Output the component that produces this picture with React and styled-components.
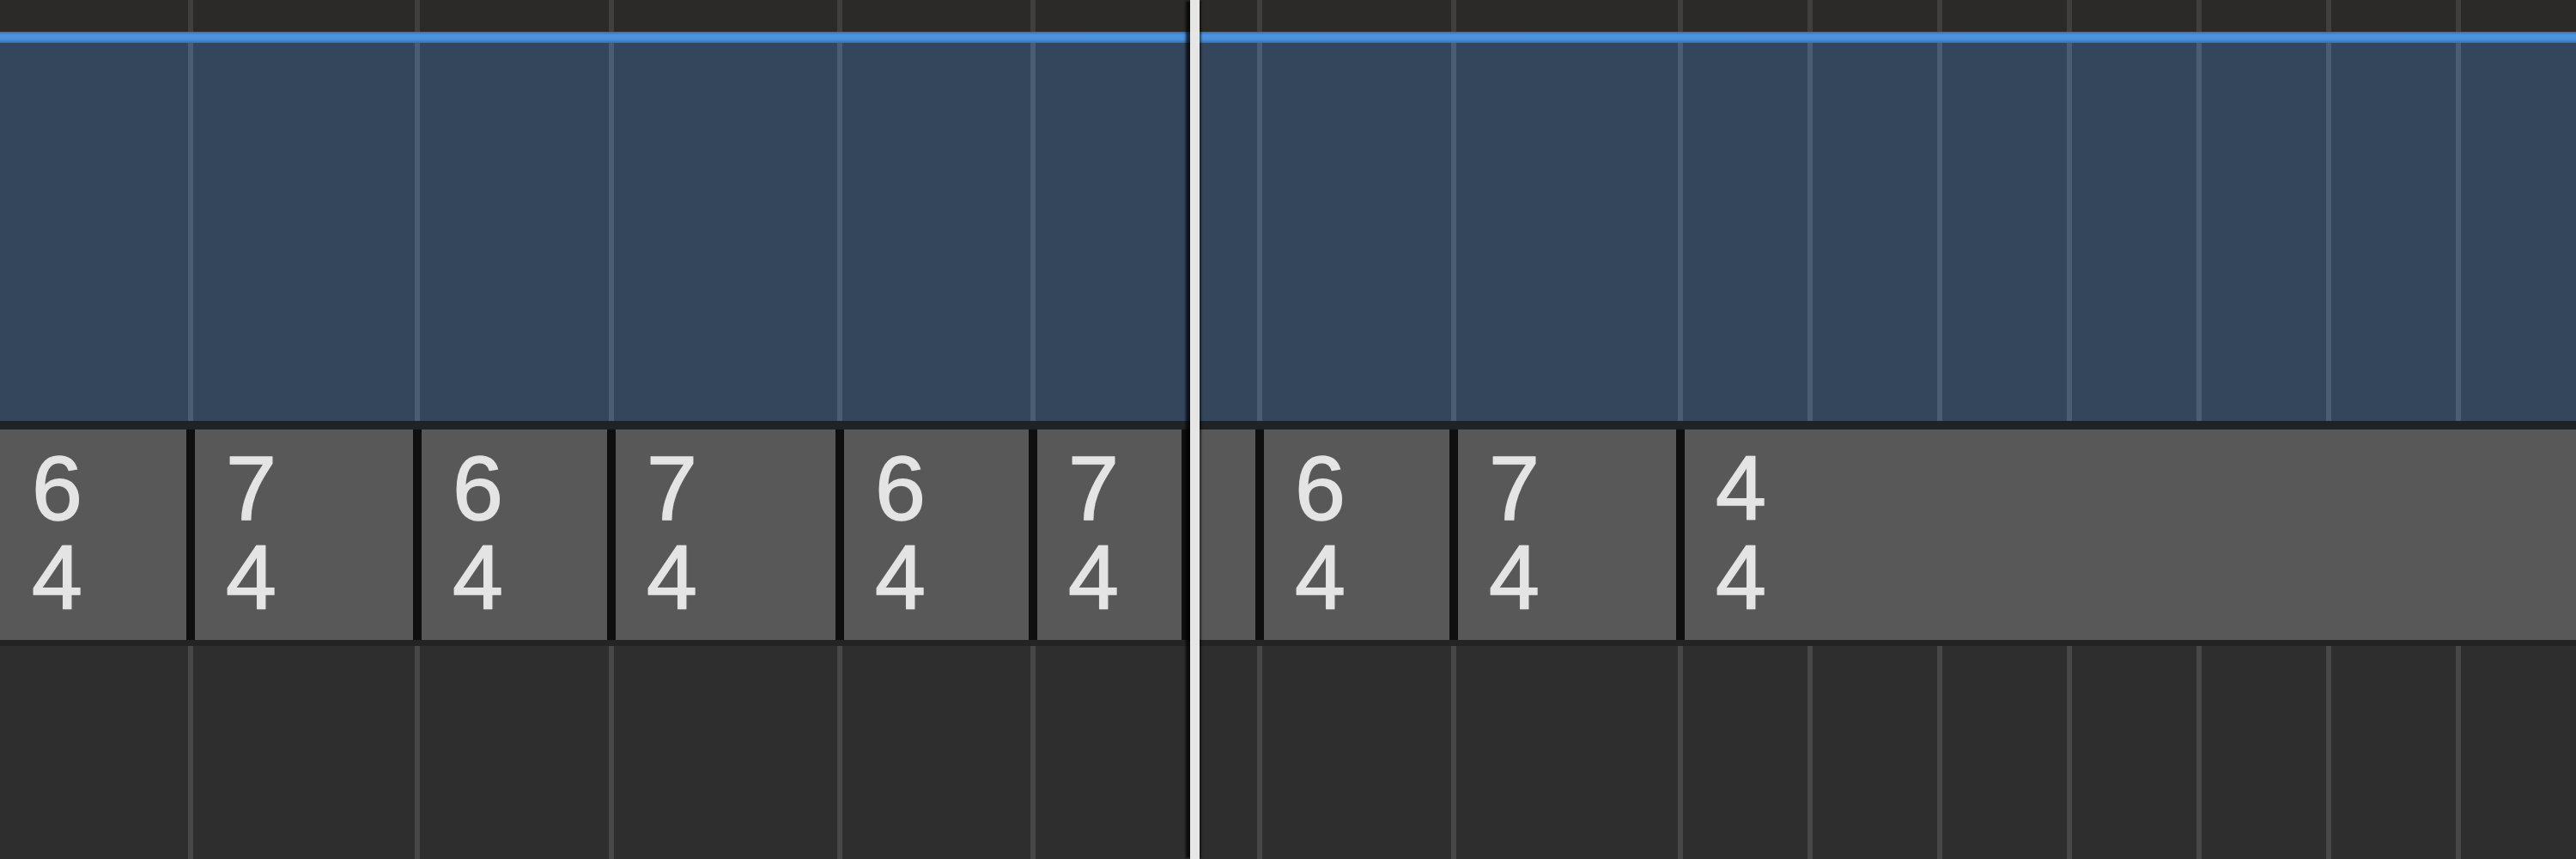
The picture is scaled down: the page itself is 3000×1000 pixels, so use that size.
import styled, { createGlobalStyle } from "styled-components";

const GlobalStyle = createGlobalStyle`
  html, body {
    margin: 0;
    padding: 0;
    background: #2e2e2e;
  }
`;

// bar lines (centre x) shared by every lane
const BAR_LINES = [222, 486, 712, 978, 1203, 1467, 1693, 1957, 2108, 2259, 2410, 2561, 2712, 2863];
const LINE_W = 6;

// time signature regions: left edge of divider, numerator, denominator
const SIGNATURES = [
  { x: 0, num: 6, den: 4 },
  { x: 217, num: 7, den: 4 },
  { x: 481, num: 6, den: 4 },
  { x: 707, num: 7, den: 4 },
  { x: 973, num: 6, den: 4 },
  { x: 1198, num: 7, den: 4 },
  { x: 1376 },
  { x: 1462, num: 6, den: 4 },
  { x: 1688, num: 7, den: 4 },
  { x: 1952, num: 4, den: 4 },
];

const tones = {
  ruler: { bg: "#2b2a28", line: "#403f3d" },
  region: { bg: "#34465c", line: "#4b5d73" },
  empty: { bg: "#2e2e2e", line: "#474747" },
};

const Editor = styled.div`
  position: relative;
  width: 3000px;
  height: 1000px;
  overflow: hidden;
  display: flex;
  flex-direction: column;
  background: #2e2e2e;
  font-family: "Liberation Sans", Arial, sans-serif;
`;

const Lane = styled.div`
  display: flex;
  height: ${(p) => p.$height}px;
  flex: ${(p) => (p.$grow ? 1 : "none")};
  background: ${(p) => tones[p.$tone].bg};
`;

const Bar = styled.div`
  box-sizing: border-box;
  flex: ${(p) => (p.$last ? 1 : "none")};
  border-left: ${(p) => (p.$first ? "none" : `${LINE_W}px solid ${tones[p.$tone].line}`)};
`;

const AccentLine = styled.div`
  height: 13px;
  background: linear-gradient(#3a6fae 0%, #4c95e4 30%, #4a8fdc 70%, #3b6ea8 100%);
`;

const Seam = styled.div`
  height: ${(p) => p.$height}px;
  background: ${(p) => p.$color};
`;

const SignatureTrack = styled.div`
  display: flex;
  height: 245px;
  background: #585858;
`;

const SignatureCell = styled.div`
  box-sizing: border-box;
  flex: ${(p) => (p.$last ? 1 : "none")};
  display: flex;
  flex-direction: column;
  padding: 16px 0 0 ${(p) => (p.$first ? 37 : 36)}px;
  border-left: ${(p) => (p.$first ? "none" : "10px solid #0f0f0f")};
  background: #585858;
  color: #e4e4e4;
  font-size: 106px;
  line-height: 104px;
  -webkit-text-stroke: 1.5px #e4e4e4;
  text-shadow: 0 0 2px rgba(228, 228, 228, 0.5);
`;

const Playhead = styled.div`
  position: absolute;
  top: 0;
  left: 1386px;
  width: 11px;
  height: 100%;
  background: #e6e6e6;
  box-shadow: -6px 0 3px -1px rgba(0, 0, 0, 0.75), 3px 0 2px -1px rgba(0, 0, 0, 0.5);
`;

function GridLane({ tone, height, grow }) {
  const first = BAR_LINES[0] - LINE_W / 2;
  return (
    <Lane $tone={tone} $height={height} $grow={grow}>
      <Bar $tone={tone} $first style={{ width: first }} />
      {BAR_LINES.map((x, i) => {
        const next = BAR_LINES[i + 1];
        const last = next === undefined;
        return (
          <Bar
            key={x}
            $tone={tone}
            $last={last}
            style={last ? undefined : { width: next - x }}
          />
        );
      })}
    </Lane>
  );
}

export default function App() {
  return (
    <>
      <GlobalStyle />
      <Editor>
        <GridLane tone="ruler" height={37} />
        <AccentLine />
        <GridLane tone="region" height={440} />
        <Seam $height={10} $color="#1f2327" />
        <SignatureTrack>
          {SIGNATURES.map((sig, i) => {
            const next = SIGNATURES[i + 1];
            const last = next === undefined;
            return (
              <SignatureCell
                key={sig.x}
                $first={i === 0}
                $last={last}
                style={last ? undefined : { width: next.x - sig.x }}
              >
                {sig.num && (
                  <>
                    <span>{sig.num}</span>
                    <span>{sig.den}</span>
                  </>
                )}
              </SignatureCell>
            );
          })}
        </SignatureTrack>
        <Seam $height={7} $color="#242424" />
        <GridLane tone="empty" grow />
        <Playhead />
      </Editor>
    </>
  );
}
